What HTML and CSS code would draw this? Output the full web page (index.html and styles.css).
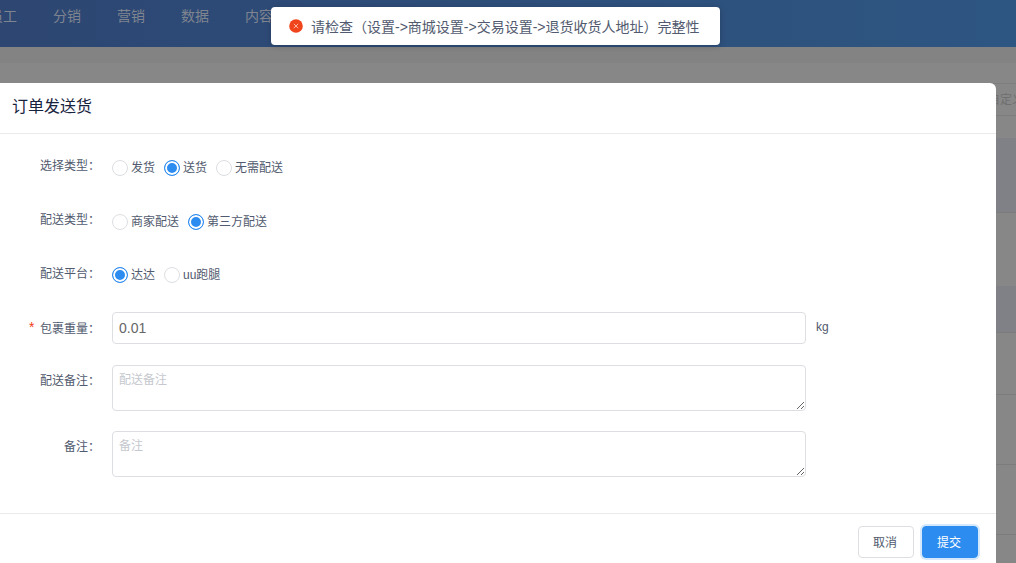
FILE: index.html
```html
<!DOCTYPE html>
<html lang="zh-CN">
<head>
  <meta charset="UTF-8">
  <title>订单发送货</title>
  <link rel="stylesheet" href="styles.css">
</head>
<body>
  <header class="topbar">
    <nav class="topnav">
      <span class="topnav-item">员工</span>
      <span class="topnav-item">分销</span>
      <span class="topnav-item">营销</span>
      <span class="topnav-item">数据</span>
      <span class="topnav-item">内容</span>
    </nav>
  </header>

  <div class="backdrop">
    <div class="back-bar"></div>
    <div class="back-gap"></div>
    <div class="back-head">自定义</div>
    <div class="back-row back-row-top"></div>
    <div class="back-row back-row-dark"></div>
    <div class="back-row back-row-plain"></div>
    <div class="back-row back-row-dark back-row-short"></div>
    <div class="back-row back-row-a"></div>
    <div class="back-row back-row-b"></div>
    <div class="back-row back-row-b"></div>
  </div>

  <div class="message">
    <svg class="message-icon" viewBox="0 0 14 14" width="14" height="14">
      <circle cx="7" cy="7" r="6.8" fill="#f0441c"/>
      <path d="M4.8 4.8l4.4 4.4M9.2 4.8l-4.4 4.4" stroke="#fbb9a6" stroke-width="1" fill="none"/>
    </svg>
    <span>请检查（设置-&gt;商城设置-&gt;交易设置-&gt;退货收货人地址）完整性</span>
  </div>

  <div class="modal">
    <div class="modal-header">订单发送货</div>
    <form class="modal-body">
      <div class="form-row row-radio">
        <label class="form-label">选择类型：</label>
        <div class="radio-group">
          <span class="radio"><i class="radio-dot"></i>发货</span>
          <span class="radio checked"><i class="radio-dot"></i>送货</span>
          <span class="radio"><i class="radio-dot"></i>无需配送</span>
        </div>
      </div>
      <div class="form-row row-radio">
        <label class="form-label">配送类型：</label>
        <div class="radio-group">
          <span class="radio"><i class="radio-dot"></i>商家配送</span>
          <span class="radio checked"><i class="radio-dot"></i>第三方配送</span>
        </div>
      </div>
      <div class="form-row row-radio row-platform">
        <label class="form-label">配送平台：</label>
        <div class="radio-group">
          <span class="radio checked"><i class="radio-dot"></i>达达</span>
          <span class="radio"><i class="radio-dot"></i>uu跑腿</span>
        </div>
      </div>
      <div class="form-row row-weight">
        <label class="form-label"><em class="required">*</em>包裹重量：</label>
        <input class="form-input" type="text" value="0.01">
        <span class="unit">kg</span>
      </div>
      <div class="form-row row-note">
        <label class="form-label">配送备注：</label>
        <textarea class="form-textarea" placeholder="配送备注"></textarea>
      </div>
      <div class="form-row row-note">
        <label class="form-label">备注：</label>
        <textarea class="form-textarea" placeholder="备注"></textarea>
      </div>
    </form>
    <div class="modal-footer">
      <button type="button" class="btn">取消</button>
      <button type="button" class="btn btn-primary">提交</button>
    </div>
  </div>
</body>
</html>
```

FILE: styles.css
```css
* {
  margin: 0;
  padding: 0;
  box-sizing: border-box;
}

html, body {
  height: 563px;
  overflow: hidden;
}

body {
  position: relative;
  font-family: "Liberation Sans", "Noto Sans CJK SC", sans-serif;
  font-size: 12px;
  color: #515a6e;
  background-color: #878787;
}

.topbar {
  height: 47px;
  background: linear-gradient(90deg, #2d4672 0%, #2e5682 100%);
}

.topnav {
  display: flex;
  margin-left: -11px;
  gap: 36px;
  padding-top: 8px;
}

.topnav-item {
  flex-shrink: 0;
  width: 28px;
  font-size: 14px;
  line-height: 16px;
  color: #7f8590;
}

.back-bar {
  height: 16px;
  background-color: #838383;
}

.back-gap {
  height: 21px;
  border-bottom: 1px solid #7e7e7e;
}

.back-head {
  height: 32px;
  padding-left: 988px;
  line-height: 33px;
  white-space: nowrap;
  color: #6f6f6f;
  border-bottom: 1px solid #7c7c7c;
}

.back-row {
  border-bottom: 1px solid #7c7c7c;
}

.back-row-top {
  height: 22px;
  border-bottom: none;
}

.back-row-dark {
  height: 75px;
  background-color: #808186;
}

.back-row-plain {
  height: 73px;
  border-bottom: none;
}

.back-row-short {
  height: 47px;
}

.back-row-a {
  height: 62px;
}

.back-row-b {
  height: 70px;
}

.message {
  position: absolute;
  top: 7px;
  left: 271px;
  width: 449px;
  height: 38px;
  display: flex;
  align-items: center;
  gap: 8px;
  padding-left: 18px;
  font-size: 14px;
  background-color: #fff;
  border-radius: 4px;
  box-shadow: 0 1px 6px rgba(0, 0, 0, 0.2);
}

.message-icon {
  flex-shrink: 0;
}

.modal {
  position: absolute;
  top: 83px;
  left: -10px;
  width: 1006px;
  height: 490px;
  background-color: #fff;
  border-radius: 6px;
}

.modal-header {
  height: 51px;
  padding-left: 22px;
  font-size: 16px;
  line-height: 48px;
  color: #17233d;
  border-bottom: 1px solid #e8eaec;
}

.modal-body {
  height: 379px;
}

.form-row {
  display: flex;
  align-items: flex-start;
}

.form-label {
  flex-shrink: 0;
  width: 110px;
  margin-right: 12px;
  text-align: right;
  line-height: 16px;
}

.required {
  margin-right: 4px;
  font-size: 14px;
  font-style: normal;
  font-family: "Liberation Mono", monospace;
  color: #ed4014;
}

.row-radio {
  height: 53.5px;
  padding-top: 25px;
}

.row-radio:first-child {
  height: 53px;
  padding-top: 24px;
}

.row-platform {
  height: 71.5px;
}

.radio-group {
  display: flex;
  gap: 9px;
  margin-top: 1px;
}

.row-platform .radio-group {
  margin-top: 0;
}

.radio {
  display: flex;
  align-items: center;
  gap: 3px;
  height: 18px;
  line-height: 18px;
}

.radio-dot {
  width: 16px;
  height: 16px;
  border: 1px solid #dcdee2;
  border-radius: 50%;
  background-color: #fff;
}

.checked .radio-dot {
  border-color: #2d8cf0;
  background-color: #2d8cf0;
  box-shadow: inset 0 0 0 2px #fff;
}

.row-weight {
  height: 53px;
}

.row-weight .form-label {
  margin-top: 9px;
}

.form-input {
  width: 694px;
  height: 32px;
  padding: 0 6px;
  font-family: inherit;
  font-size: 14px;
  color: #666;
  border: 1px solid #dcdee2;
  border-radius: 4px;
  outline: none;
}

.unit {
  margin-left: 10px;
  margin-top: 7px;
  line-height: 16px;
}

.row-note {
  height: 66px;
}

.row-note .form-label {
  margin-top: 8px;
}

.form-textarea {
  width: 694px;
  height: 46px;
  padding: 6px;
  font-family: inherit;
  font-size: 12px;
  line-height: 16px;
  color: #515a6e;
  border: 1px solid #dcdee2;
  border-radius: 4px;
  outline: none;
}

.form-textarea::placeholder {
  color: #c5c8ce;
}

.modal-footer {
  display: flex;
  justify-content: flex-end;
  gap: 8px;
  height: 60px;
  padding: 12px 18px 0 0;
  border-top: 1px solid #e8eaec;
}

.btn {
  width: 56px;
  height: 32px;
  padding: 0 2px 2px 0;
  font-family: inherit;
  font-size: 12px;
  color: #515a6e;
  background-color: #fff;
  border: 1px solid #dcdee2;
  border-radius: 4px;
}

.btn-primary {
  color: #fff;
  background-color: #2d8cf0;
  border-color: #2d8cf0;
  box-shadow: 0 0 0 2px rgba(45, 140, 240, 0.2);
}
```
